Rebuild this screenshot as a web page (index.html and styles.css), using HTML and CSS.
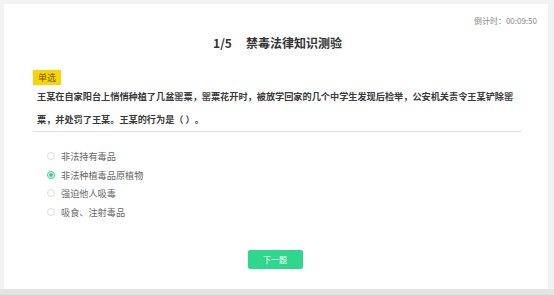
FILE: index.html
```html
<!DOCTYPE html>
<html lang="zh-CN">
<head>
<meta charset="utf-8">
<title>禁毒法律知识测验</title>
<link rel="stylesheet" href="styles.css">
</head>
<body>
<div class="page">
  <div class="card">
    <div class="timer">倒计时：00:09:50</div>
    <h1 class="title"><span class="num">1/5</span><span>禁毒法律知识测验</span></h1>
    <div class="section">
      <span class="tag">单选</span>
      <p class="question">王某在自家阳台上悄悄种植了几盆罂粟，罂粟花开时，被放学回家的几个中学生发现后检举，公安机关责令王某铲除罂粟，并处罚了王某。王某的行为是（ ）。</p>
      <ul class="options">
        <li class="option"><span class="radio"></span>非法持有毒品</li>
        <li class="option checked"><span class="radio"></span>非法种植毒品原植物</li>
        <li class="option"><span class="radio"></span>强迫他人吸毒</li>
        <li class="option"><span class="radio"></span>吸食、注射毒品</li>
      </ul>
    </div>
    <div class="actions"><button class="next">下一题</button></div>
  </div>
  <div class="side"></div>
</div>
<div class="bottom"></div>
</body>
</html>
```

FILE: styles.css
```css
* { box-sizing: border-box; }
html, body { margin: 0; padding: 0; }
body {
  background: #f3f3f3;
  font-family: "Noto Sans CJK SC", "Noto Sans", sans-serif;
  width: 554px;
  height: 295px;
  overflow: hidden;
  text-spacing-trim: space-all;
}
.page {
  display: flex;
  padding: 4px 0 0 4px;
  height: 289px;
}
.card {
  width: 544px;
  height: 285px;
  background: #fff;
  padding: 11px 11px 0 29px;
  display: flex;
  flex-direction: column;
}
.side {
  width: 6px;
  background: #f1f1f1;
}
.timer {
  text-align: right;
  font-size: 8px;
  line-height: 12px;
  color: #8a8a8a;
}
.title {
  margin: 6px 0 0;
  text-align: center;
  font-size: 12px;
  line-height: 20px;
  font-weight: bold;
  color: #333;
  padding-right: 15px;
}
.title .num { margin-right: 14px; }
.section {
  margin-top: 17px;
  width: 488px;
}
.tag {
  display: block;
  width: fit-content;
  background: #fad400;
  color: #6b5a00;
  font-size: 9px;
  line-height: 15px;
  height: 15px;
  padding: 0 5px;
}
.question {
  margin: 0;
  padding: 0 0 0 4px;
  font-size: 9.17px;
  line-height: 23px;
  font-weight: bold;
  color: #3a3a3a;
  border-bottom: 1px solid #e2e2e2;
}
.options {
  list-style: none;
  margin: 15px 0 0;
  padding: 0 0 0 14px;
}
.option {
  display: flex;
  align-items: center;
  font-size: 9.17px;
  line-height: 18.5px;
  color: #666;
}
.radio {
  width: 8px;
  height: 8px;
  border-radius: 50%;
  border: 1px solid #dcdcdc;
  margin-right: 6px;
  display: flex;
  align-items: center;
  justify-content: center;
}
.option.checked .radio { border-color: #2fd08a; }
.option.checked .radio::after {
  content: "";
  width: 4px;
  height: 4px;
  border-radius: 50%;
  background: #2fd08a;
}
.actions {
  margin-top: 29px;
  padding-right: 20px;
  display: flex;
  justify-content: center;
}
.next {
  width: 55px;
  height: 19px;
  border: none;
  border-radius: 2px;
  background: #2fd68c;
  color: #fff;
  font-family: inherit;
  font-size: 8px;
  padding: 0;
}
.bottom {
  height: 6px;
  background: #e4e4e4;
}
```
